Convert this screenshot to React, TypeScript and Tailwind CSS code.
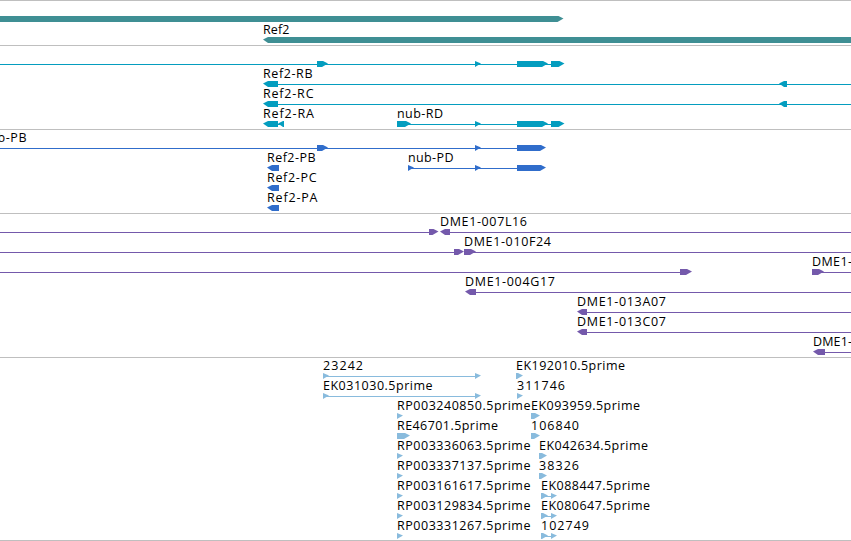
type Dir = 'left' | 'right'

interface Label {
  text: string
  x: number
  width: number
}

interface Block {
  from: number
  to: number
  dir: Dir
}

interface Row {
  labels?: Label[]
  lines?: [number, number][]
  blocks: Block[]
}

interface Track {
  name: string
  color: string
  rowClass: string
  trackClass: string
  rows: Row[]
}

const VIEW_WIDTH = 851

const label = (text: string, x: number, end: number): Label => ({ text, x, width: end - x })
const fwd = (from: number, to: number): Block => ({ from, to, dir: 'right' })
const rev = (from: number, to: number): Block => ({ from, to, dir: 'left' })

const tracks: Track[] = [
  {
    name: 'genes',
    color: '#3f8f94',
    rowClass: 'h-[21px]',
    trackClass: 'pt-0.5',
    rows: [
      { blocks: [fwd(-10, 563.5)] },
      { labels: [label('Ref2', 263, 289.5)], blocks: [rev(263, 870)] },
    ],
  },
  {
    name: 'transcripts',
    color: '#049dbf',
    rowClass: 'h-5',
    trackClass: 'pt-0.5 pb-px',
    rows: [
      { lines: [[0, 552]], blocks: [fwd(317, 328), fwd(475, 481), fwd(517, 548), fwd(551, 564.5)] },
      { labels: [label('Ref2-RB', 263, 312.5)], lines: [[278, VIEW_WIDTH]], blocks: [rev(263, 278), rev(779, 787)] },
      { labels: [label('Ref2-RC', 263, 313.5)], lines: [[278, VIEW_WIDTH]], blocks: [rev(263, 278), rev(779, 787)] },
      {
        labels: [label('Ref2-RA', 263, 314), label('nub-RD', 397, 443)],
        lines: [[277, 280], [405, 552]],
        blocks: [rev(263, 278), rev(278, 284), fwd(397, 411), fwd(475, 481), fwd(517, 548), fwd(551, 564.5)],
      },
    ],
  },
  {
    name: 'proteins',
    color: '#306dcb',
    rowClass: 'h-5',
    trackClass: 'pt-0.5 pb-px',
    rows: [
      { labels: [label('nub-PB', -19, 26.5)], lines: [[0, 518]], blocks: [fwd(317, 328), fwd(475, 481), fwd(517, 546)] },
      {
        labels: [label('Ref2-PB', 267, 315.5), label('nub-PD', 408, 453.5)],
        lines: [[409, 518]],
        blocks: [rev(267, 279), fwd(408, 414), fwd(475, 481), fwd(517, 546)],
      },
      { labels: [label('Ref2-PC', 267, 316.5)], blocks: [rev(267, 279)] },
      { labels: [label('Ref2-PA', 267, 317.5)], blocks: [rev(267, 279)] },
    ],
  },
  {
    name: 'clones',
    color: '#7459ab',
    rowClass: 'h-5',
    trackClass: 'pt-0.5 pb-px',
    rows: [
      { labels: [label('DME1-007L16', 440, 527)], lines: [[0, 430], [449, VIEW_WIDTH]], blocks: [fwd(429, 438.5), rev(440, 450)] },
      { labels: [label('DME1-010F24', 464, 551)], lines: [[0, 455], [470, VIEW_WIDTH]], blocks: [fwd(454, 464), fwd(464, 476)] },
      { labels: [label('DME1-', 812, 852)], lines: [[0, 681], [818, VIEW_WIDTH]], blocks: [fwd(680, 692), fwd(812, 824)] },
      { labels: [label('DME1-004G17', 465, 555)], lines: [[475, VIEW_WIDTH]], blocks: [rev(465, 476)] },
      { labels: [label('DME1-013A07', 577, 666)], lines: [[586, VIEW_WIDTH]], blocks: [rev(577, 587)] },
      { labels: [label('DME1-013C07', 577, 666)], lines: [[586, VIEW_WIDTH]], blocks: [rev(577, 587)] },
      { labels: [label('DME1-', 813, 852)], lines: [[824, VIEW_WIDTH]], blocks: [rev(813, 825)] },
    ],
  },
  {
    name: 'ests',
    color: '#89bbdd',
    rowClass: 'h-5',
    trackClass: 'pt-0.5',
    rows: [
      { labels: [label('23242', 323, 363), label('EK192010.5prime', 516, 625)], lines: [[324, 476]], blocks: [fwd(323, 329), fwd(475, 481), fwd(516, 523)] },
      { labels: [label('EK031030.5prime', 323, 432.5), label('311746', 517, 565)], lines: [[324, 476]], blocks: [fwd(323, 329), fwd(475, 481), fwd(517, 523)] },
      { labels: [label('RP003240850.5prime', 397, 530.5), label('EK093959.5prime', 531, 640)], blocks: [fwd(397, 403), fwd(531, 540)] },
      { labels: [label('RE46701.5prime', 397, 498), label('106840', 531, 579)], blocks: [fwd(397, 410), fwd(531, 540)] },
      { labels: [label('RP003336063.5prime', 397, 530.5), label('EK042634.5prime', 539, 648)], blocks: [fwd(397, 403), fwd(539, 547)] },
      { labels: [label('RP003337137.5prime', 397, 530.5), label('38326', 539, 579)], blocks: [fwd(397, 403), fwd(539, 547)] },
      { labels: [label('RP003161617.5prime', 397, 530.5), label('EK088447.5prime', 541, 650)], lines: [[543, 552]], blocks: [fwd(397, 403), fwd(541, 548), fwd(551, 557)] },
      { labels: [label('RP003129834.5prime', 397, 530.5), label('EK080647.5prime', 541, 650)], lines: [[543, 552]], blocks: [fwd(397, 403), fwd(541, 548), fwd(551, 557)] },
      { labels: [label('RP003331267.5prime', 397, 530.5), label('102749', 541, 589)], lines: [[543, 552]], blocks: [fwd(397, 403), fwd(541, 548), fwd(551, 557)] },
    ],
  },
]

// Six pixel high exon box with a pointed end
function blockPoints({ from, to, dir }: Block) {
  const head = Math.min(6, to - from)
  if (dir === 'right') {
    return `${from},13 ${to - head + (head < to - from ? 1 : 0)},13 ${to},15.6 ${to - head},19 ${from},19`
  }
  return `${to},13 ${from + head - 1},13 ${from},15.6 ${from + head - 1},19 ${to},19`
}

function FeatureRow({ row, color, className }: { row: Row; color: string; className: string }) {
  return (
    <svg className={`block w-full overflow-visible ${className}`} fill={color}>
      {row.lines?.map(([from, to]) => (
        <rect key={from} x={from} y={16} width={to - from} height={1} />
      ))}
      {row.blocks.map((b) => (
        <polygon key={b.from} points={blockPoints(b)} />
      ))}
      {row.labels?.map((l) => (
        <text key={l.text} x={l.x} y={10} textLength={l.width} fill="#000" className="text-[12.5px] font-[370]">
          {l.text}
        </text>
      ))}
    </svg>
  )
}

export default function App() {
  return (
    <main className="h-[541px] w-[851px] overflow-hidden border-b border-[#bfbfbf] bg-white font-['Open_Sans','Noto_Sans',sans-serif]">
      {tracks.map((track) => (
        <section key={track.name} className={`border-t border-[#bfbfbf] ${track.trackClass}`}>
          {track.rows.map((row, i) => (
            <FeatureRow key={i} row={row} color={track.color} className={track.rowClass} />
          ))}
        </section>
      ))}
    </main>
  )
}
